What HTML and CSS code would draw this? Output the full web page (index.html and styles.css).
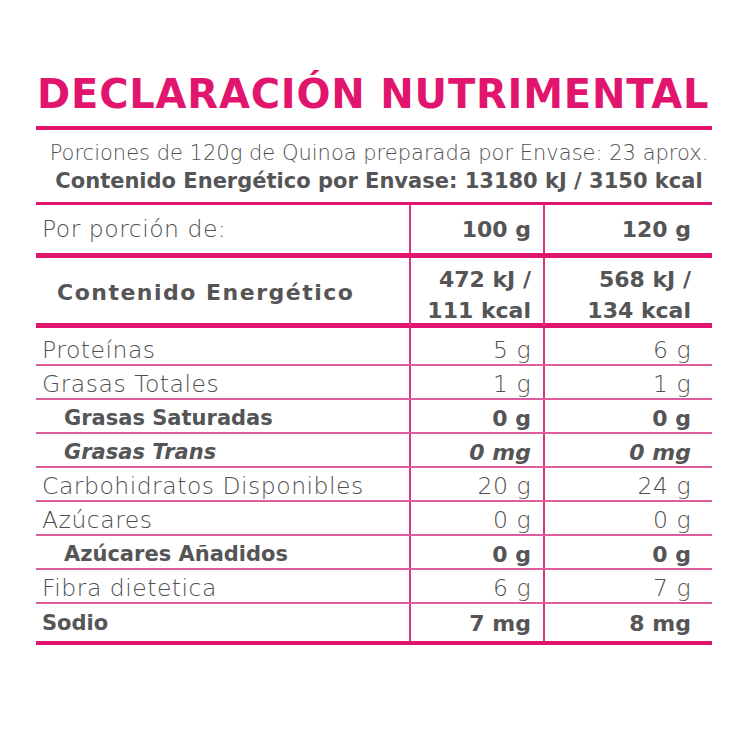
FILE: index.html
```html
<!DOCTYPE html>
<html lang="es">
<head>
<meta charset="utf-8">
<title>Declaración Nutrimental</title>
<link rel="stylesheet" href="styles.css">
</head>
<body>
<main class="panel">
  <h1 class="title">DECLARACIÓN NUTRIMENTAL</h1>
  <div class="intro">
    <p class="portions">Porciones de 120g de Quinoa preparada por Envase: 23 aprox.</p>
    <p class="energy">Contenido Energético por Envase: 13180 kJ / 3150 kcal</p>
  </div>
  <div class="table">
    <div class="row head">
      <div class="cell label">Por porción de:</div>
      <div class="cell val c2 bold">100 g</div>
      <div class="cell val c3 bold">120 g</div>
    </div>
    <div class="row kcal">
      <div class="cell label bold spaced indent1">Contenido Energético</div>
      <div class="cell val c2 bold two">472 kJ /<br>111 kcal</div>
      <div class="cell val c3 bold two">568 kJ /<br>134 kcal</div>
    </div>
    <div class="row item first">
      <div class="cell label">Proteínas</div>
      <div class="cell val c2">5 g</div>
      <div class="cell val c3">6 g</div>
    </div>
    <div class="row item">
      <div class="cell label">Grasas Totales</div>
      <div class="cell val c2">1 g</div>
      <div class="cell val c3">1 g</div>
    </div>
    <div class="row item">
      <div class="cell label bold indent2">Grasas Saturadas</div>
      <div class="cell val c2 bold">0 g</div>
      <div class="cell val c3 bold">0 g</div>
    </div>
    <div class="row item">
      <div class="cell label bold italic indent2">Grasas Trans</div>
      <div class="cell val c2 bold italic">0 mg</div>
      <div class="cell val c3 bold italic">0 mg</div>
    </div>
    <div class="row item">
      <div class="cell label">Carbohidratos Disponibles</div>
      <div class="cell val c2">20 g</div>
      <div class="cell val c3">24 g</div>
    </div>
    <div class="row item">
      <div class="cell label">Azúcares</div>
      <div class="cell val c2">0 g</div>
      <div class="cell val c3">0 g</div>
    </div>
    <div class="row item">
      <div class="cell label bold indent2">Azúcares Añadidos</div>
      <div class="cell val c2 bold">0 g</div>
      <div class="cell val c3 bold">0 g</div>
    </div>
    <div class="row item">
      <div class="cell label">Fibra dietetica</div>
      <div class="cell val c2">6 g</div>
      <div class="cell val c3">7 g</div>
    </div>
    <div class="row item last">
      <div class="cell label bold">Sodio</div>
      <div class="cell val c2 bold">7 mg</div>
      <div class="cell val c3 bold">8 mg</div>
    </div>
  </div>
</main>
</body>
</html>
```

FILE: styles.css
```css
html, body {
  margin: 0;
  padding: 0;
  background: #ffffff;
}

body {
  font-family: "DejaVu Sans", "Noto Sans", sans-serif;
  color: #555557;
}

.panel {
  width: 676px;
  margin-left: 36px;
  padding-top: 72px;
}

.title {
  margin: 0;
  padding: 0 0 10px 1px;
  font-family: "DejaVu Sans", sans-serif;
  font-weight: 700;
  font-size: 40px;
  line-height: 44px;
  letter-spacing: 0.8px;
  white-space: nowrap;
  color: #e1156e;
  border-bottom: 4px solid #e1156e;
}

.intro {
  display: flex;
  flex-direction: column;
  align-items: center;
  padding: 10px 0 6px 10px;
}

.portions {
  margin: 0;
  font-weight: 300;
  font-size: 21px;
  line-height: 26px;
  white-space: nowrap;
  color: #4f4f51;
}

.energy {
  margin: 0;
  font-weight: 700;
  font-size: 21px;
  line-height: 30px;
  white-space: nowrap;
}

.table {
  border-top: 3px solid #e1156e;
  border-bottom: 4px solid #e1156e;
}

.row {
  display: grid;
  grid-template-columns: 373px 134px 169px;
}

.cell {
  display: flex;
  align-items: center;
  font-size: 23.5px;
  font-weight: 300;
  letter-spacing: 0.5px;
  white-space: nowrap;
  color: #4f4f51;
}

.c2, .c3 {
  border-left: 2px solid #d8358a;
  justify-content: flex-end;
}

.c2 {
  padding-right: 12px;
}

.c3 {
  padding-right: 21px;
}

.label {
  padding-left: 6px;
}

.bold {
  font-weight: 700;
  font-size: 21px;
  letter-spacing: 0;
  color: #555557;
}

.val.bold {
  font-size: 22px;
}

.italic {
  font-style: italic;
}

.spaced {
  font-size: 22px;
  letter-spacing: 1.5px;
}

.indent1 {
  padding-left: 21px;
}

.indent2 {
  padding-left: 28px;
}

.two {
  text-align: right;
  line-height: 31px;
  padding-top: 6px;
  box-sizing: border-box;
}

.head {
  height: 48px;
  border-bottom: 5px solid #e1156e;
}

.kcal {
  height: 65px;
  border-bottom: 5px solid #e1156e;
}

.item {
  height: 32px;
  border-bottom: 2px solid #dc5e9c;
}

.item .cell {
  padding-top: 4px;
  box-sizing: border-box;
}

.item.first {
  height: 36px;
}

.item.first .cell {
  padding-top: 7px;
}

.item.last {
  height: 37px;
  border-bottom: none;
}

.item.last .cell {
  padding-top: 1px;
}
```
